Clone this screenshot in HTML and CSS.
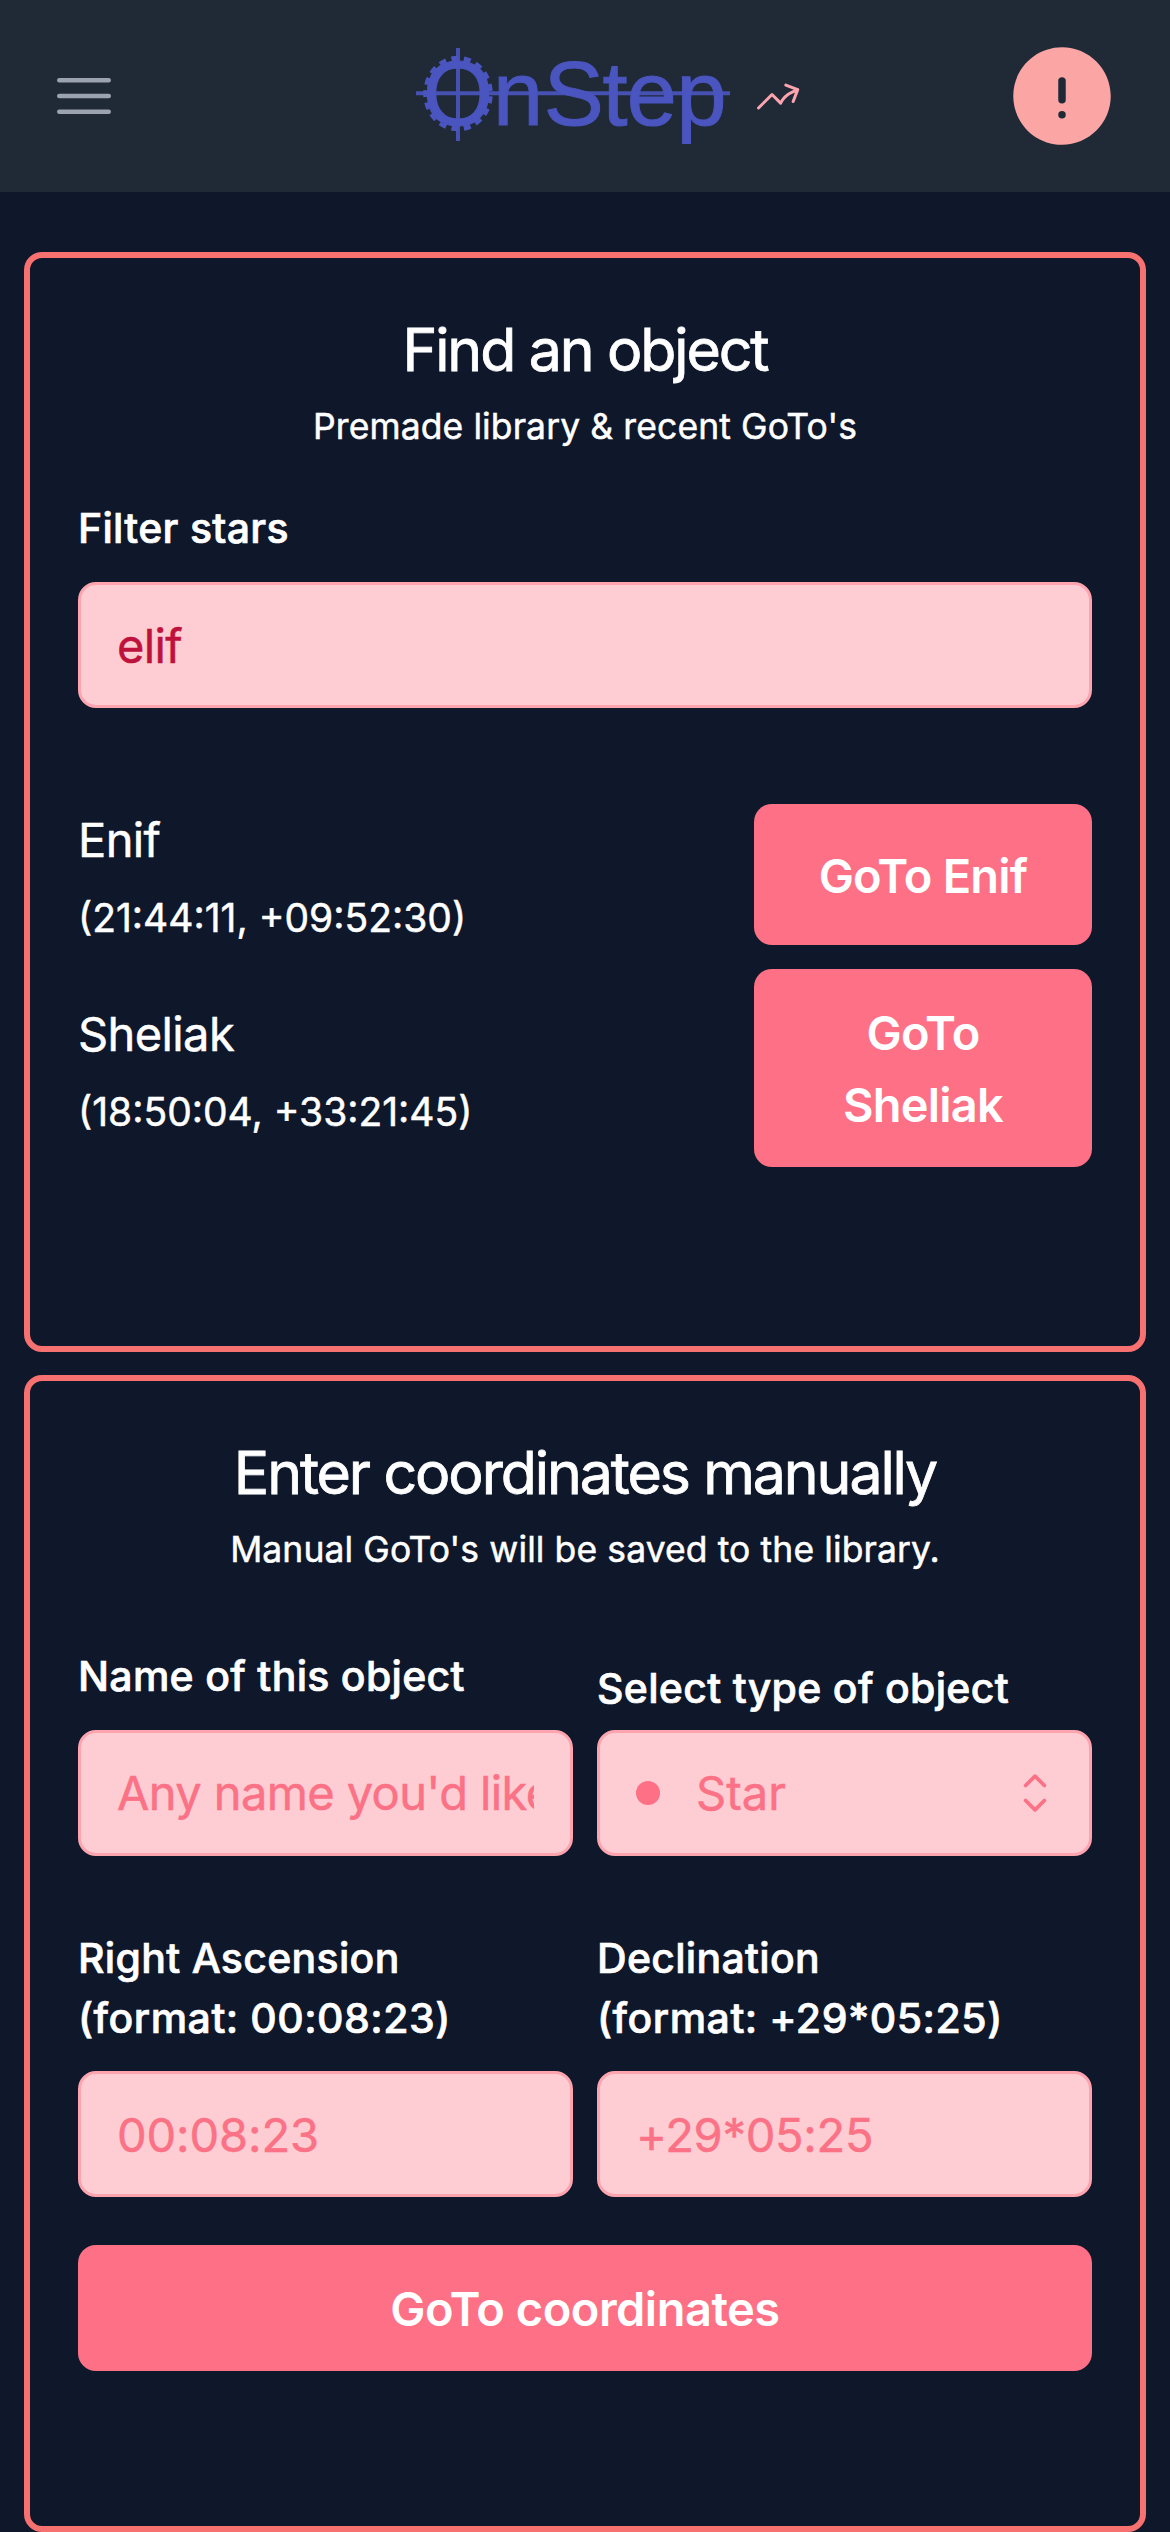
FILE: index.html
```html
<!DOCTYPE html>
<html lang="en">
<head>
<meta charset="utf-8">
<title>OnStep</title>
<link rel="stylesheet" href="styles.css">
</head>
<body>
<header class="topbar">
  <svg class="menu-icon" viewBox="0 0 24 24"><path d="M3.75 6.75h16.5M3.75 12h16.5M3.75 17.25h16.5"/></svg>
  <div class="brand">
    <svg class="logo" viewBox="0 0 314 96">
      <ellipse class="gear-teeth" cx="42" cy="45.6" rx="31.8" ry="34.8" pathLength="170"/>
      <path class="crosshair" d="M42 0v93M0 45.3h314"/>
      <text class="wordmark" x="7 77 127.7 186.5 210.8 260.5" y="77.3">OnStep</text>
    </svg>
    <svg class="trend-icon" viewBox="0 0 24 24"><path d="M2.25 18L9 11.25l4.306 4.306a11.95 11.95 0 015.814-5.518l2.74-1.22m0 0l-5.94-2.281m5.94 2.28l-2.28 5.941"/></svg>
  </div>
  <svg class="alert-icon" viewBox="0 0 24 24"><path d="M2.25 12c0-5.385 4.365-9.75 9.75-9.75s9.75 4.365 9.75 9.75-4.365 9.75-9.75 9.75S2.25 17.385 2.25 12zM12 8.25a.75.75 0 01.75.75v3.75a.75.75 0 01-1.5 0V9a.75.75 0 01.75-.75zm0 8.25a.75.75 0 100-1.5.75.75 0 000 1.5z"/></svg>
</header>
<main class="page">
  <section class="card card-find">
    <h2 class="card-title">Find an object</h2>
    <p class="card-subtitle">Premade library &amp; recent GoTo's</p>
    <label class="label filter-label" for="filter">Filter stars</label>
    <input class="field filter-field" id="filter" type="text" value="elif">
    <div class="stars">
      <div class="star-row">
        <div class="star"><div class="star-name">Enif</div><div class="star-coords">(21:44:11, +09:52:30)</div></div>
        <button class="button star-button">GoTo Enif</button>
      </div>
      <div class="star-row star-row-tall">
        <div class="star"><div class="star-name">Sheliak</div><div class="star-coords">(18:50:04, +33:21:45)</div></div>
        <button class="button star-button">GoTo Sheliak</button>
      </div>
    </div>
  </section>
  <section class="card card-manual">
    <h2 class="card-title">Enter coordinates manually</h2>
    <p class="card-subtitle">Manual GoTo's will be saved to the library.</p>
    <div class="form-grid">
      <div class="form-item">
        <label class="label" for="name">Name of this object</label>
        <input class="field" id="name" type="text" placeholder="Any name you'd like">
      </div>
      <div class="form-item form-item-select">
        <div class="label">Select type of object</div>
        <div class="field select">
          <span class="dot"></span>
          <span class="select-value">Star</span>
          <svg class="select-icon" viewBox="0 0 24 24"><path d="M8.25 15L12 18.75 15.75 15m-7.5-6L12 5.25 15.75 9"/></svg>
        </div>
      </div>
      <div class="form-item">
        <label class="label" for="ra">Right Ascension<br><span class="format">(format: 00:08:23)</span></label>
        <input class="field field-ra" id="ra" type="text" placeholder="00:08:23">
      </div>
      <div class="form-item">
        <label class="label" for="dec">Declination<br><span class="format">(format: +29*05:25)</span></label>
        <input class="field field-dec" id="dec" type="text" placeholder="+29*05:25">
      </div>
    </div>
    <button class="button submit-button">GoTo coordinates</button>
  </section>
</main>
</body>
</html>
```
FILE: styles.css
```css
* {
  box-sizing: border-box;
}

body {
  margin: 0;
  background: #0f172a;
  color: #fff;
  font-family: Inter, "Liberation Sans", sans-serif;
  -webkit-text-stroke: 0.5px currentColor;
}

h2,
p {
  margin: 0;
  font-weight: 400;
  text-align: center;
}

/* Header */
.topbar {
  display: flex;
  align-items: center;
  height: 192px;
  padding: 0 48px;
  background: #202a37;
}

.menu-icon {
  width: 72px;
  height: 72px;
  fill: none;
  stroke: #9ca3af;
  stroke-width: 1.5;
  stroke-linecap: round;
}

.brand {
  display: flex;
  align-items: center;
  gap: 24px;
  margin-left: 296px;
}

.logo {
  width: 314px;
  height: 96px;
}

.gear-teeth,
.crosshair {
  fill: none;
  stroke: #4a55c0;
}

.gear-teeth {
  stroke-width: 6;
  stroke-dasharray: 5.6 4.4;
  stroke-dashoffset: -2.2;
}

.crosshair {
  stroke-width: 4;
  opacity: 0.9;
}

.wordmark {
  fill: #4a55c0;
  stroke: #4a55c0;
  stroke-width: 1;
  font: 90px "Liberation Sans", Arial, sans-serif;
}

.trend-icon {
  width: 48px;
  height: 48px;
  fill: none;
  stroke: #fda4af;
  stroke-width: 1.5;
  stroke-linecap: round;
  stroke-linejoin: round;
}

.alert-icon {
  width: 120px;
  height: 120px;
  margin-left: auto;
  fill: #fca5a5;
  fill-rule: evenodd;
}

/* Cards */
.page {
  display: flex;
  flex-direction: column;
  gap: 23px;
  padding: 60px 24px 0;
}

.card {
  padding: 43px 48px 0;
  border: 6px solid #f87171;
  border-radius: 18px;
}

.card-find {
  height: 1100px;
}

.card-manual {
  height: 1157px;
}

.card-title {
  padding-top: 1px;
  font-size: 59px;
  line-height: 95px;
  letter-spacing: -2.1px;
  -webkit-text-stroke-width: 0.8px;
}

.card-subtitle {
  font-size: 35.5px;
  line-height: 60px;
  letter-spacing: 0.1px;
}

.label {
  display: block;
  font-size: 41px;
  font-weight: 500;
  line-height: 60px;
  letter-spacing: 0.3px;
  -webkit-text-stroke-width: 0.7px;
}

.format {
  letter-spacing: 0.5px;
}

.filter-label {
  margin-top: 41px;
}

/* Controls */
.field {
  display: block;
  width: 100%;
  height: 126px;
  padding: 0 36px;
  border: 3px solid #fda4af;
  border-radius: 18px;
  outline: none;
  background: #fecdd3;
  color: #be123c;
  font: 400 47px Inter, "Liberation Sans", sans-serif;
  letter-spacing: -0.6px;
}

.field::placeholder {
  color: #fb7185;
  opacity: 1;
}

.filter-field {
  margin-top: 24px;
}

.field-ra {
  letter-spacing: -0.1px;
}

.field-dec {
  letter-spacing: -0.3px;
}

.button {
  display: block;
  padding: 2px 48px 0;
  border: 0;
  border-radius: 18px;
  background: #fd7085;
  color: #fff;
  font: 600 47px/72px Inter, "Liberation Sans", sans-serif;
  letter-spacing: -0.8px;
  -webkit-text-stroke-width: 0;
}

.stars {
  display: flex;
  flex-direction: column;
  gap: 24px;
  margin-top: 96px;
}

.star-row {
  display: flex;
  align-items: center;
  justify-content: space-between;
  height: 141px;
}

.star-row-tall {
  height: 198px;
}

.star {
  height: 141px;
}

.star-name {
  font-size: 47px;
  line-height: 72px;
  letter-spacing: -0.6px;
}

.star-coords {
  margin-top: 12px;
  font-size: 39px;
  line-height: 60px;
}

.star-button {
  width: 338px;
  height: 100%;
}

/* Manual entry form */
.form-grid {
  display: grid;
  grid-template-columns: 1fr 1fr;
  align-items: end;
  gap: 72px 24px;
  margin-top: 66px;
}

.form-item {
  display: flex;
  flex-direction: column;
  gap: 23.5px;
  min-width: 0;
}

.form-item-select {
  gap: 12px;
}

.select {
  display: flex;
  align-items: center;
  color: #fb7185;
  letter-spacing: 0;
}

.dot {
  width: 24px;
  height: 24px;
  border-radius: 50%;
  background: #fd7085;
}

.select-value {
  margin-left: 36px;
}

.select-icon {
  width: 60px;
  height: 60px;
  margin: 0 -12px 0 auto;
  fill: none;
  stroke: #fb7185;
  stroke-width: 1.5;
  stroke-linecap: round;
  stroke-linejoin: round;
}

.submit-button {
  width: 100%;
  height: 126px;
  margin-top: 48px;
  letter-spacing: -0.5px;
}
```
